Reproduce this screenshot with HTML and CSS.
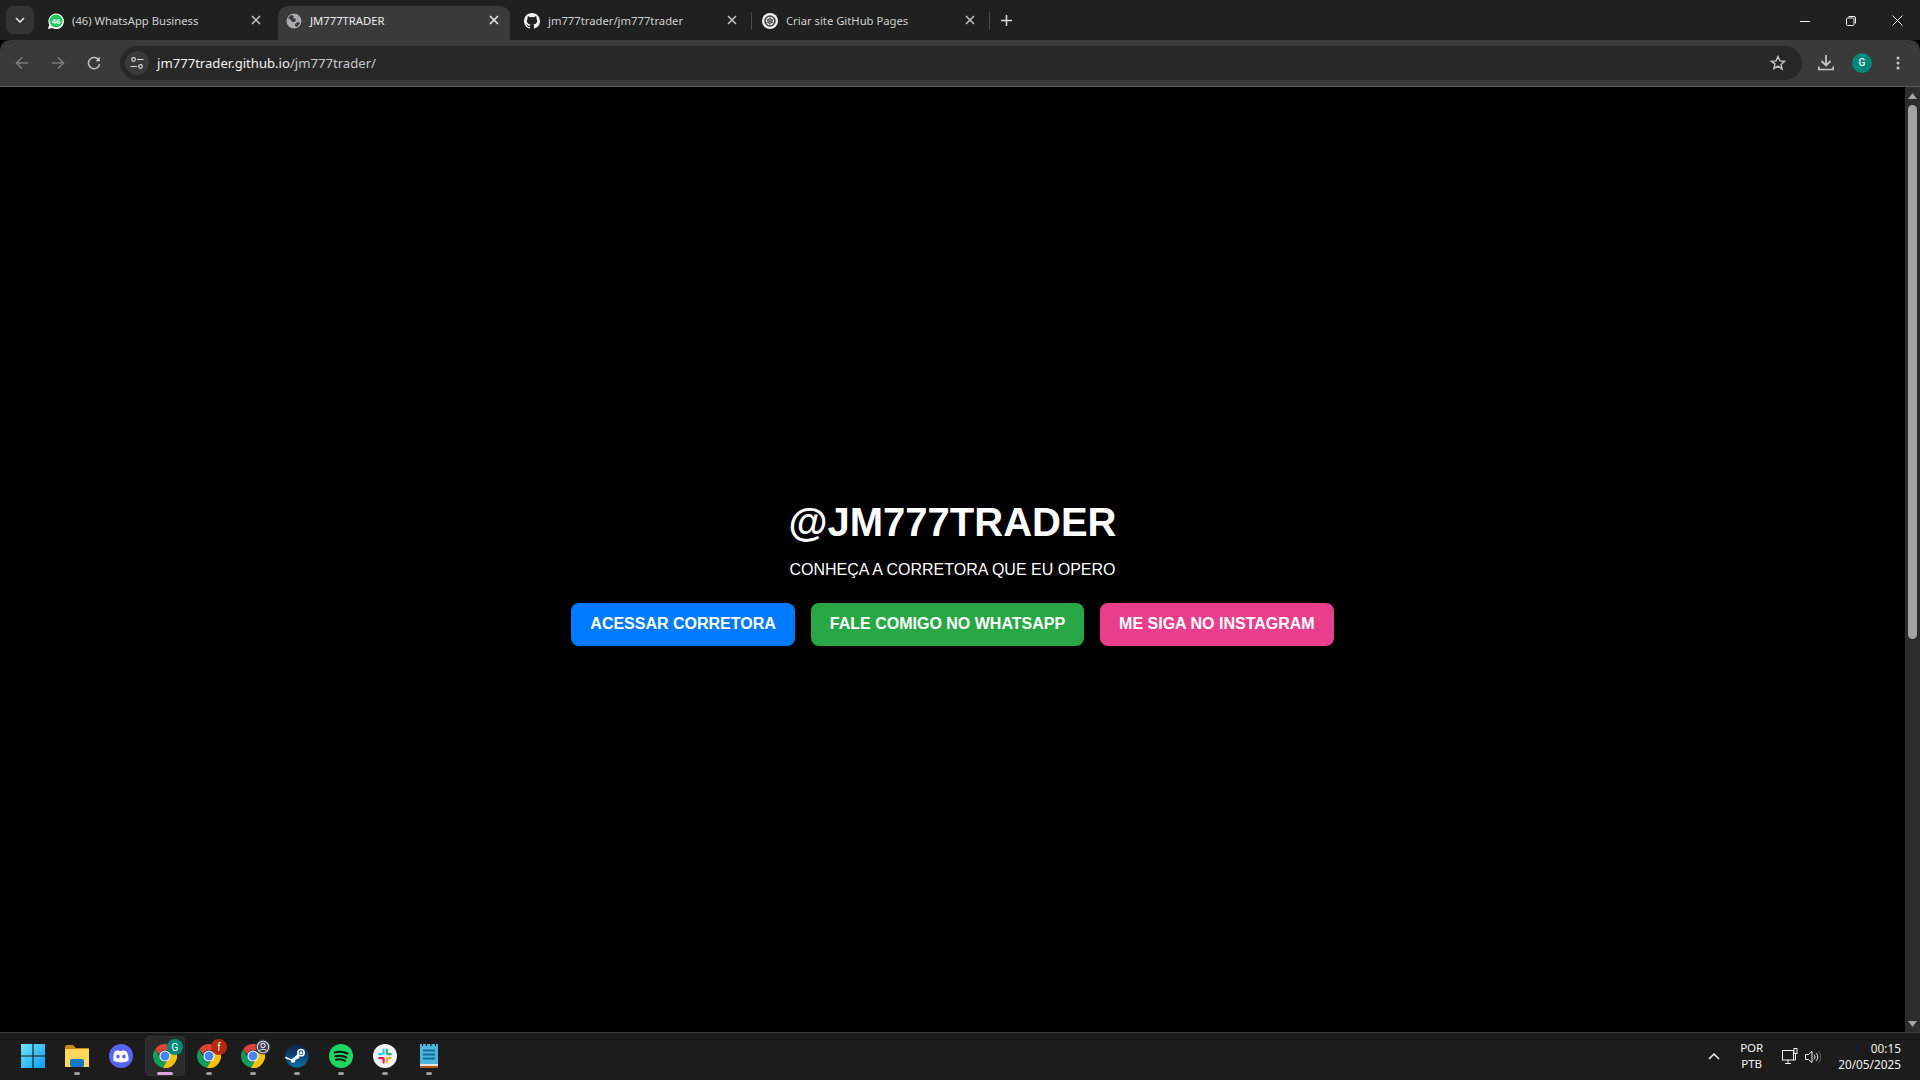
FILE: index.html
```html
<!DOCTYPE html>
<html lang="pt-BR">
<head>
<meta charset="utf-8">
<title>JM777TRADER</title>
<link rel="stylesheet" href="styles.css">
</head>
<body>
<svg class="defs" width="0" height="0" aria-hidden="true">
  <defs>
    <symbol id="chrome" viewBox="0 0 24 24">
      <path fill="#db4437" d="M12 0a12 12 0 0 1 10.4 6H12a6 6 0 0 0-5.8 4.4L2.1 5.2A12 12 0 0 1 12 0z"/>
      <path fill="#0f9d58" d="M2.1 5.2l5.2 9A6 6 0 0 0 13.6 18l-3.7 5.8A12 12 0 0 1 2.1 5.2z"/>
      <path fill="#f4c20d" d="M22.4 6A12 12 0 0 1 9.9 23.8l5.2-8.8A6 6 0 0 0 16 7.5z"/>
      <circle cx="12" cy="12" r="5.6" fill="#fff"/>
      <circle cx="12" cy="12" r="4.5" fill="#4285f4"/>
    </symbol>
    <symbol id="close" viewBox="0 0 10 10">
      <path d="M1 1l8 8M9 1l-8 8" stroke="currentColor" stroke-width="1.5" fill="none"/>
    </symbol>
  </defs>
</svg>

<div class="tabstrip">
  <div class="tablist-btn">
    <svg width="10" height="6" viewBox="0 0 10 6"><path d="M1 1l4 4 4-4" stroke="#e3e3e3" stroke-width="1.6" fill="none"/></svg>
  </div>
  <div class="tab">
    <svg class="favicon" viewBox="0 0 16 16"><path fill="#fff" d="M0 16l1.2-4.2A7.8 7.8 0 1 1 4.200 15z"/><circle cx="8" cy="8" r="6.500" fill="#1ec95c"/><text x="8" y="10.800" class="wa-count">46</text></svg>
    <span class="tab-title">(46) WhatsApp Business</span>
    <svg class="tab-close"><use href="#close"/></svg>
  </div>
  <div class="tab tab-active">
    <svg class="favicon" viewBox="0 0 16 16"><circle cx="8" cy="8" r="7.500" fill="#a8abae"/><path fill="#3a3a3a" d="M2 5l3-3 3 1-1 2 3 1-1 3-3 0-1-2zM9 11l3-2 2 1-3 4-2-1z"/></svg>
    <span class="tab-title tab-title-active">JM777TRADER</span>
    <svg class="tab-close tab-close-active"><use href="#close"/></svg>
  </div>
  <div class="tab">
    <svg class="favicon" viewBox="0 0 16 16"><path fill="#f0f0f0" fill-rule="evenodd" d="M8 0C3.580 0 0 3.580 0 8c0 3.540 2.290 6.530 5.470 7.590.4.070.55-.17.55-.38v-1.340c-2.230.49-2.690-1.070-2.690-1.070-.36-.92-.89-1.170-.89-1.170-.73-.5.050-.49.050-.49.800.06 1.230.83 1.230.83.710 1.220 1.870.87 2.330.66.070-.52.280-.87.510-1.070-1.780-.2-3.640-.89-3.640-3.950 0-.87.310-1.590.820-2.150-.08-.2-.36-1.020.080-2.120 0 0 .67-.21 2.200.82a7.600 7.600 0 0 1 4 0c1.530-1.040 2.200-.82 2.200-.82.440 1.100.160 1.920.080 2.120.510.560.820 1.270.820 2.150 0 3.070-1.870 3.750-3.650 3.950.290.250.540.730.540 1.480v2.200c0 .21.150.46.550.38A8 8 0 0 0 16 8c0-4.420-3.580-8-8-8z"/></svg>
    <span class="tab-title">jm777trader/jm777trader</span>
    <svg class="tab-close"><use href="#close"/></svg>
    <span class="tab-sep"></span>
  </div>
  <div class="tab">
    <svg class="favicon" viewBox="0 0 16 16"><circle cx="8" cy="8" r="8" fill="#f0f0f0"/><circle cx="8" cy="8" r="5" fill="none" stroke="#444" stroke-width="1.600"/><circle cx="8" cy="8" r="2.200" fill="none" stroke="#444" stroke-width="1.100"/><path d="M3.500 5.500l9 5M12.500 5.500l-9 5M8 3v10" stroke="#555" stroke-width=".8"/></svg>
    <span class="tab-title">Criar site GitHub Pages</span>
    <svg class="tab-close"><use href="#close"/></svg>
    <span class="tab-sep"></span>
  </div>
  <svg class="newtab" width="11" height="11" viewBox="0 0 11 11"><path d="M5.500 0v11M0 5.500h11" stroke="#d8d8d8" stroke-width="1.500"/></svg>
  <div class="window-ctrls">
    <svg width="10" height="10" viewBox="0 0 10 10"><path d="M0 5.500h10" stroke="#f2f2f2" stroke-width="1"/></svg>
    <svg width="10" height="10" viewBox="0 0 10 10"><rect x=".5" y="2" width="7.500" height="7.500" rx="1.200" fill="none" stroke="#f2f2f2"/><path d="M2.500 .5h5.500a1.500 1.500 0 0 1 1.500 1.500v5.500" fill="none" stroke="#f2f2f2"/></svg>
    <svg width="11" height="11" viewBox="0 0 11 11"><path d="M.5.500l10 10M10.500.5l-10 10" stroke="#f2f2f2"/></svg>
  </div>
</div>

<div class="toolbar">
  <svg class="nav-icon" width="14" height="14" viewBox="0 0 14 14"><path d="M13 7H2M7 1.500L1.500 7 7 12.500" stroke="#7b7b7b" stroke-width="1.600" fill="none"/></svg>
  <svg class="nav-icon" width="14" height="14" viewBox="0 0 14 14"><path d="M1 7h11M7 1.500L12.500 7 7 12.500" stroke="#7b7b7b" stroke-width="1.600" fill="none"/></svg>
  <svg class="nav-icon" width="14" height="14" viewBox="0 0 14 14"><path d="M12 4.500A5.600 5.600 0 1 0 12.600 8" stroke="#c6c6c6" stroke-width="1.500" fill="none"/><path d="M12.800 .8v4.400H8.400z" fill="#c6c6c6"/></svg>
  <div class="omnibox">
    <div class="site-info">
      <svg width="14" height="12" viewBox="0 0 14 12"><circle cx="3.500" cy="2.500" r="1.800" fill="none" stroke="#d8d8d8" stroke-width="1.200"/><path d="M7 2.500h6.500M.5 9.500H7" stroke="#d8d8d8" stroke-width="1.200"/><circle cx="10.500" cy="9.500" r="1.800" fill="none" stroke="#d8d8d8" stroke-width="1.200"/></svg>
    </div>
    <span class="url">jm777trader.github.io<span class="url-path">/jm777trader/</span></span>
    <svg class="star" width="16" height="16" viewBox="0 0 16 16"><path d="M8 1.500l1.900 4.400 4.700.4-3.600 3.100 1.100 4.700L8 11.100l-4.100 2.500L5 8.900 1.400 6.300l4.700-.4z" fill="none" stroke="#c6c6c6" stroke-width="1.400"/></svg>
  </div>
  <svg class="tool-dl" width="16" height="16" viewBox="0 0 16 16"><path d="M8 0v10M3.500 6L8 10.500 12.500 6" stroke="#c6c6c6" stroke-width="1.800" fill="none"/><path d="M.8 11.500v3h14.400v-3" stroke="#c6c6c6" stroke-width="1.600" fill="none"/></svg>
  <div class="avatar">G</div>
  <svg class="tool-menu" width="4" height="14" viewBox="0 0 4 14"><circle cx="2" cy="2" r="1.500" fill="#c6c6c6"/><circle cx="2" cy="7" r="1.500" fill="#c6c6c6"/><circle cx="2" cy="12" r="1.500" fill="#c6c6c6"/></svg>
</div>

<div class="viewport">
  <main class="page">
    <h1 class="title">@JM777TRADER</h1>
    <p class="subtitle">CONHEÇA A CORRETORA QUE EU OPERO</p>
    <div class="actions">
      <a class="btn btn-blue">ACESSAR CORRETORA</a>
      <a class="btn btn-green">FALE COMIGO NO WHATSAPP</a>
      <a class="btn btn-pink">ME SIGA NO INSTAGRAM</a>
    </div>
  </main>
  <div class="scrollbar">
    <svg width="9" height="6" viewBox="0 0 9 6"><path d="M4.500 0L9 6H0z" fill="#a3a3a3"/></svg>
    <div class="scroll-track"><div class="scroll-thumb"></div></div>
    <svg width="9" height="6" viewBox="0 0 9 6"><path d="M4.500 6L9 0H0z" fill="#a3a3a3"/></svg>
  </div>
</div>

<footer class="taskbar">
  <div class="task">
    <svg width="24" height="24" viewBox="0 0 24 24">
      <defs><linearGradient id="win" x1="0" y1="0" x2="1" y2="1"><stop offset="0" stop-color="#6fe6f8"/><stop offset="1" stop-color="#0a9cf5"/></linearGradient></defs>
      <path fill="url(#win)" d="M0 0h11.400v11.400H0zM12.600 0H24v11.400H12.600zM0 12.600h11.400V24H0zM12.600 12.600H24V24H12.600z"/>
    </svg>
  </div>
  <div class="task task-open">
    <svg width="24" height="22" viewBox="0 0 24 22"><path fill="#c98f0c" d="M0 2a2 2 0 0 1 2-2h6l3 3h13v6H0z"/><path fill="#ffd75e" d="M0 4h24v18H0z"/><rect x="5" y="14" width="14" height="8" rx="2" fill="#0f78c4"/></svg>
    <i class="dot"></i>
  </div>
  <div class="task">
    <svg width="24" height="24" viewBox="0 0 24 24"><circle cx="12" cy="12" r="12" fill="#5865f2"/><path fill="#fff" d="M4.500 16.800c4.800 2.300 10.200 2.300 15 0 .5-3.800-.5-6.800-2.300-9.500-1.200-.5-2.400-.9-3.700-1.100l-.4.900a11 11 0 0 0-3.200 0l-.4-.9c-1.300.2-2.500.6-3.700 1.100C4.300 10.500 4 13.500 4.500 16.800z"/><ellipse cx="9" cy="12.500" rx="1.700" ry="2" fill="#5865f2"/><ellipse cx="15" cy="12.500" rx="1.700" ry="2" fill="#5865f2"/></svg>
  </div>
  <div class="task task-active">
    <svg width="24" height="24"><use href="#chrome"/></svg>
    <span class="badge badge-g">G</span>
    <i class="dot dot-active"></i>
  </div>
  <div class="task task-open">
    <svg width="24" height="24"><use href="#chrome"/></svg>
    <span class="badge badge-f">f</span>
    <i class="dot"></i>
  </div>
  <div class="task task-open">
    <svg width="24" height="24"><use href="#chrome"/></svg>
    <svg class="badge badge-user" viewBox="0 0 16 16"><circle cx="8" cy="8" r="7.500" fill="#3b3f4c"/><circle cx="8" cy="8" r="5.700" fill="none" stroke="#d5d8e2" stroke-width="1.100"/><circle cx="8" cy="6.500" r="2.100" fill="none" stroke="#d5d8e2" stroke-width="1.100"/><path d="M4.500 12c1-2.400 6-2.400 7 0" fill="none" stroke="#d5d8e2" stroke-width="1.100"/></svg>
    <i class="dot"></i>
  </div>
  <div class="task task-open">
    <svg width="24" height="24" viewBox="0 0 24 24"><defs><linearGradient id="steam" x1="0" y1="0" x2="0" y2="1"><stop offset="0" stop-color="#0f1f45"/><stop offset="1" stop-color="#0b6fa8"/></linearGradient></defs><circle cx="12" cy="12" r="11.500" fill="url(#steam)"/><path fill="#fff" d="M0 12.500l6.500 2.800 3-2.300 4-3.500 1 4.500-4 1.800-.5 2.400-3.200.5-1.200-2.500L.5 14.500z"/><circle cx="16" cy="8.700" r="3.900" fill="#fff"/><circle cx="16" cy="8.700" r="2.400" fill="#17527f"/><circle cx="16" cy="8.700" r="1.500" fill="#fff"/></svg>
    <i class="dot"></i>
  </div>
  <div class="task task-open">
    <svg width="24" height="24" viewBox="0 0 24 24"><circle cx="12" cy="12" r="12" fill="#1ed760"/><path d="M5.500 8.500c4.500-1.300 9-1 13 1M6.300 12.300c3.800-1 7.700-.8 11 1.100M7 15.800c3-.8 6.300-.6 9 1" stroke="#121212" stroke-width="2" stroke-linecap="round" fill="none"/></svg>
    <i class="dot"></i>
  </div>
  <div class="task task-open">
    <svg width="24" height="24" viewBox="0 0 24 24"><circle cx="12" cy="12" r="12" fill="#f4f4f4"/><rect x="9.500" y="4.500" width="2.200" height="6" rx="1.100" fill="#36c5f0"/><rect x="5" y="9" width="5" height="2.200" rx="1.100" fill="#36c5f0"/><rect x="12.800" y="4.500" width="2.200" height="6" rx="1.100" fill="#2eb67d"/><rect x="13.500" y="9" width="5.500" height="2.200" rx="1.100" fill="#2eb67d"/><rect x="12.800" y="13" width="6" height="2.200" rx="1.100" fill="#ecb22e"/><rect x="12.800" y="14" width="2.200" height="5.500" rx="1.100" fill="#ecb22e"/><rect x="5" y="13" width="6.500" height="2.200" rx="1.100" fill="#e01e5a"/><rect x="9.500" y="14" width="2.200" height="5.500" rx="1.100" fill="#e01e5a"/></svg>
    <i class="dot"></i>
  </div>
  <div class="task task-open">
    <svg width="18" height="24" viewBox="0 0 18 24"><rect width="18" height="22" y="0" fill="#4fb5dd"/><rect y="20" width="18" height="2.500" fill="#e9e4d8"/><rect y="22" width="18" height="2" fill="#a85b1a"/><path d="M3 6.500h12M3 10.500h12M3 14.500h12" stroke="#0f6d96" stroke-width="2"/><path d="M2.500 0v2M6.500 0v2M11 0v2M15.500 0v2" stroke="#1b1b1b" stroke-width="1.200"/></svg>
    <i class="dot"></i>
  </div>
  <div class="tray">
    <svg class="tray-chevron" width="12" height="7" viewBox="0 0 12 7"><path d="M1 6l5-5 5 5" stroke="#f2f2f2" stroke-width="1.500" fill="none"/></svg>
    <div class="lang"><span>POR</span><span>PTB</span></div>
    <svg class="tray-net" width="16" height="17" viewBox="0 0 16 17"><rect x=".5" y="2.500" width="11" height="9.500" fill="none" stroke="#f2f2f2"/><path d="M6 12v3M3 15.500h6" stroke="#f2f2f2"/><rect x="12" y=".5" width="3" height="5" fill="#1c1c1c" stroke="#f2f2f2"/><path d="M13.500 5.500V12H11" stroke="#f2f2f2" fill="none"/></svg>
    <svg class="tray-vol" width="16" height="14" viewBox="0 0 16 14"><path d="M.5 4.500h3L7 1.500v11l-3.500-3h-3z" fill="none" stroke="#f2f2f2"/><path d="M9 4.500c1.300 1.400 1.300 3.600 0 5M11 2.800c2.200 2.300 2.200 6.100 0 8.400" fill="none" stroke="#f2f2f2"/><path d="M13.300 1c3 3.300 3 8.700 0 12" fill="none" stroke="#666"/></svg>
    <div class="clock"><span>00:15</span><span>20/05/2025</span></div>
  </div>
</footer>
</body>
</html>
```

FILE: styles.css
```css
* { box-sizing: border-box; }
html, body { margin: 0; height: 100%; overflow: hidden; }
body {
  display: flex;
  flex-direction: column;
  height: 1080px;
  background: #000;
  font-family: "Noto Sans", "Liberation Sans", sans-serif;
}
.defs { position: absolute; }

/* tab strip */
.tabstrip {
  display: flex;
  align-items: flex-end;
  height: 40px;
  flex: none;
  padding-left: 6px;
  background: #1f2020;
}
.tablist-btn {
  display: flex;
  align-items: center;
  justify-content: center;
  width: 28px;
  height: 28px;
  margin: 0 6px 6px 0;
  border-radius: 8px;
  background: #333434;
}
.tab {
  position: relative;
  display: flex;
  align-items: center;
  width: 238px;
  height: 34px;
  padding: 0 0 0 8px;
  flex: none;
}
.tab-active {
  background: #3a3a3a;
  border-radius: 10px 10px 0 0;
  width: 232px;
  margin-right: 6px;
}
.favicon { width: 16px; height: 16px; flex: none; margin-top: -5px; }
.wa-count { font: 700 8px "Liberation Sans", sans-serif; fill: #fff; text-anchor: middle; }
.tab-title {
  margin: -5px 0 0 8px;
  font-size: 11.25px;
  color: #d0d0d0;
  white-space: nowrap;
}
.tab-title-active { color: #ececec; }
.tab-close {
  position: absolute;
  left: 211px;
  top: 9px;
  width: 10px;
  height: 10px;
  color: #c4c4c4;
}
.tab-close-active { color: #ececec; }
.tab-sep {
  position: absolute;
  left: 235px;
  top: 6px;
  width: 1px;
  height: 18px;
  background: #4a4a4a;
}
.newtab { margin: 0 0 14px 9px; flex: none; }
.window-ctrls {
  display: flex;
  align-items: center;
  gap: 36px;
  margin: 0 17px 14px auto;
}

/* toolbar */
.toolbar {
  display: flex;
  align-items: center;
  flex: none;
  height: 47px;
  padding: 0 20px 1px 15px;
  background: #3a3a3a;
  border-radius: 10px 10px 0 0;
  border-bottom: 1px solid #5a5a5a;
}
.nav-icon { flex: none; margin-right: 22px; }
.nav-icon:nth-of-type(3) { margin-right: 19px; }
.omnibox {
  display: flex;
  align-items: center;
  flex: 1;
  height: 34px;
  padding: 0 16px 0 5px;
  border-radius: 17px;
  background: #282828;
}
.site-info {
  display: flex;
  align-items: center;
  justify-content: center;
  width: 24px;
  height: 24px;
  border-radius: 50%;
  background: #3a3a3a;
}
.url {
  margin-left: 8px;
  font-size: 13.125px;
  color: #f0f0f0;
  white-space: nowrap;
}
.url-path { color: #c8c8c8; }
.star { margin-left: auto; }
.tool-dl { margin-left: 16px; flex: none; }
.avatar {
  display: flex;
  align-items: center;
  justify-content: center;
  width: 20px;
  height: 20px;
  margin-left: 18px;
  border-radius: 50%;
  background: #00897b;
  color: #e8f5f3;
  font: 500 10px Roboto, sans-serif;
}
.tool-menu { margin: 0 0 0 24px; flex: none; }

/* page */
.viewport { display: flex; flex: 1; min-height: 0; }
.page {
  display: flex;
  flex: 1;
  flex-direction: column;
  align-items: center;
  justify-content: center;
  padding-top: 25px;
  background: #000;
  color: #fff;
  font-family: "Liberation Sans", Arial, sans-serif;
}
.title {
  margin: 0 0 16px;
  font-size: 40px;
  font-weight: 700;
  line-height: 46px;
}
.subtitle {
  margin: 0 0 24px;
  font-size: 16px;
  line-height: 18px;
}
.actions { display: flex; gap: 16px; }
.btn {
  display: block;
  padding: 12px 19px 13px;
  border-radius: 8px;
  font-size: 16px;
  font-weight: 700;
  line-height: 18px;
  color: #fff;
}
.btn-blue { background: #007bff; }
.btn-green { background: #28a745; }
.btn-pink { background: #e83e8c; }

.scrollbar {
  display: flex;
  flex-direction: column;
  align-items: center;
  flex: none;
  width: 15px;
  padding: 6px 0 5px;
  background: #2c2c2c;
}
.scroll-track { flex: 1; width: 9px; padding-top: 6px; }
.scroll-thumb { height: 534px; border-radius: 5px; background: #a3a3a3; }

/* taskbar */
.taskbar {
  display: flex;
  align-items: center;
  flex: none;
  height: 48px;
  padding-left: 11px;
  background: #1c1c1c;
  border-top: 1px solid #3c3c3c;
}
.task {
  position: relative;
  display: flex;
  align-items: center;
  justify-content: center;
  width: 44px;
  height: 47px;
  padding-bottom: 2px;
  flex: none;
}
.task-active::before {
  content: "";
  position: absolute;
  left: 2px;
  right: 2px;
  top: 3px;
  bottom: 4px;
  border-radius: 4px;
  background: #2b2b2b;
  border: 1px solid #333;
}
.task-active > svg { position: relative; }
.dot {
  position: absolute;
  left: 19px;
  bottom: 5px;
  width: 6px;
  height: 3px;
  border-radius: 2px;
  background: #9a9a9a;
}
.dot-active { left: 14px; width: 16px; background: #dca3e0; }
.badge {
  position: absolute;
  left: 24px;
  top: 6px;
  display: flex;
  align-items: center;
  justify-content: center;
  width: 16px;
  height: 16px;
  border-radius: 50%;
  color: #fff;
  font: 400 10px Roboto, sans-serif;
}
.badge-g { background: #00897b; }
.badge-f { background: #b5290f; }
.badge-user { background: none; }

/* tray */
.tray {
  display: flex;
  align-items: center;
  margin-left: auto;
  color: #f2f2f2;
  font-size: 11.8px;
}
.tray-chevron { flex: none; }
.lang {
  display: flex;
  flex-direction: column;
  align-items: center;
  margin: 0 0 2px 20px;
  font-size: 11.500px;
  line-height: 16px;
}
.tray-net { margin-left: 19px; }
.tray-vol { margin-left: 7px; }
.clock {
  display: flex;
  flex-direction: column;
  align-items: flex-end;
  margin: 0 19px 2px 17px;
  line-height: 16px;
  white-space: nowrap;
}
```
